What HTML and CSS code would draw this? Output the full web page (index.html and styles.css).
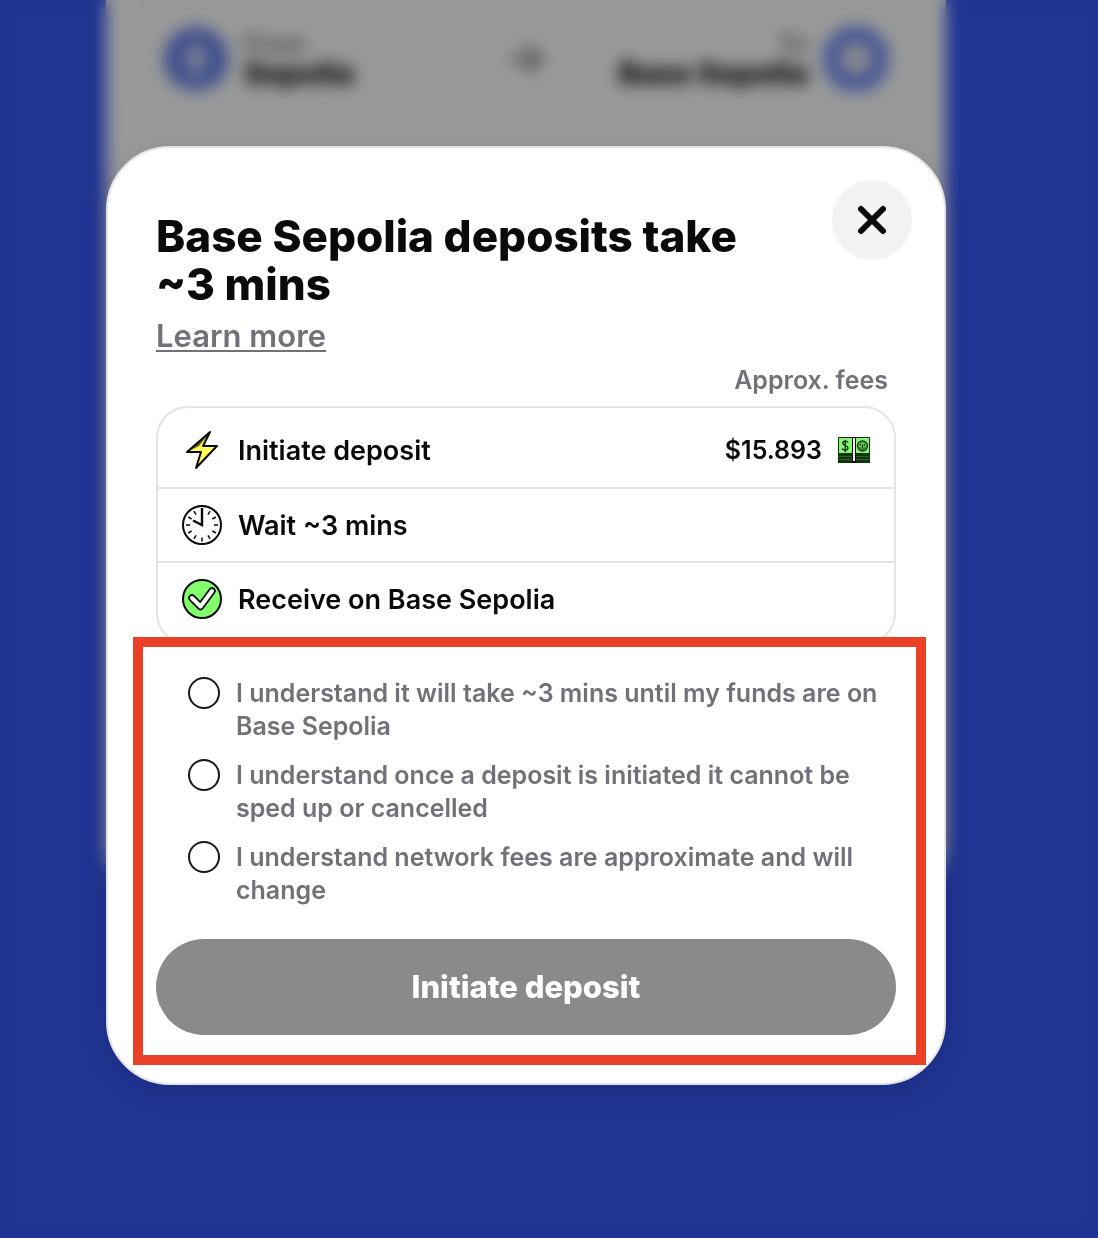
FILE: index.html
```html
<!DOCTYPE html>
<html lang="en">
<head>
<meta charset="utf-8">
<meta name="viewport" content="width=device-width, initial-scale=1">
<title>Base Sepolia deposit</title>
<link rel="stylesheet" href="styles.css">
</head>
<body>
<div class="page">
  <main class="bridge" aria-hidden="true">
    <div class="route">
      <svg class="chain" viewBox="0 0 64 64"><circle cx="32" cy="32" r="32" fill="#627eea"/><path d="M32 10 46 33 32 41 18 33zM32 44 46 36 32 55 18 36z" fill="#cdd5f6"/></svg>
      <div class="route-name">
        <span class="route-label">From</span>
        <span class="route-chain">Sepolia</span>
      </div>
      <svg class="arrow" viewBox="0 0 36 36" fill="none" stroke="#71717a" stroke-width="5" stroke-linecap="round" stroke-linejoin="round"><path d="M4 18h27M20 7l12 11-12 11"/></svg>
      <div class="route-name route-name-to">
        <span class="route-label">To</span>
        <span class="route-chain">Base Sepolia</span>
      </div>
      <svg class="chain" viewBox="0 0 64 64"><circle cx="32" cy="32" r="25" fill="#e8e8f0" stroke="#6a89f8" stroke-width="16"/><path d="M24 33h14" stroke="#a0aee8" stroke-width="4"/></svg>
    </div>
  </main>

  <div class="overlay">
    <div class="modal" role="dialog" aria-modal="true" aria-labelledby="modal-title">
      <button class="close" type="button" aria-label="Close">
        <svg viewBox="0 0 32 32" fill="none" stroke="#0a0a0b" stroke-width="6" stroke-linecap="round"><path d="M5 5l22 22M27 5 5 27"/></svg>
      </button>
      <h1 class="title" id="modal-title">Base Sepolia deposits take ~3 mins</h1>
      <a class="learn" href="#">Learn more</a>
      <p class="fees">Approx. fees</p>
      <ul class="steps">
        <li class="step">
          <svg class="step-icon" viewBox="0 0 40 40"><path d="M28 2 5 22h14l-5 16L35 16H21z" fill="#ffff55"/><path d="M28 2 5 22l12-6z" fill="#5b5a1c"/><path d="M28 2 5 22h14l-5 16L35 16H21z" fill="none" stroke="#0a0a0b" stroke-width="2" stroke-linejoin="round"/></svg>
          <span class="step-name">Initiate deposit</span>
          <span class="cost">$15.893</span>
          <svg class="cash" viewBox="0 0 32 26"><path fill="#12340e" d="M0 0h32v26H0z"/><path fill="#83f774" d="M1 1h30v15H1z"/><path d="M1 19.500h30M1 22.500h30" stroke="#2f6427"/><path fill="#0a0a0b" d="M14 0h4v26h-4z"/><path fill="#eee" d="M15 1h2v23h-2z"/><path d="M10 5.500C9 3.500 4.500 4 4.800 6.500S10 8.500 10 11 5 13.500 4.200 11.500M7.300 3v12" fill="none" stroke="#12340e" stroke-width="1.400"/><circle cx="24.500" cy="9" r="5" fill="#58bd4b" stroke="#12340e" stroke-width="1.300"/><path d="M22.500 7v1.500M26.500 7v1.500M22 10.500c1 2.500 4 2.500 5 0M24.500 8v3" fill="none" stroke="#12340e"/></svg>
        </li>
        <li class="step">
          <svg class="step-icon" viewBox="0 0 40 40" fill="none" stroke="#0a0a0b"><circle cx="20" cy="20" r="19" fill="#fff" stroke-width="2"/><path d="M20 32.500v4" stroke-width="1.500"/><path d="M32 20h4M4 20h4M30.400 14l3.400-2M26 9.600l2-3.400M14 9.600l-2-3.400M9.600 14l-3.400-2M9.600 26l-3.400 2M14 30.400l-2 3.400M26 30.400l2 3.400M30.400 26l3.400 2" stroke-width="1.500"/><path d="M20 3v17l-9-4.500" stroke-width="2.400"/></svg>
          <span class="step-name">Wait ~3 mins</span>
        </li>
        <li class="step">
          <svg class="step-icon" viewBox="0 0 40 40" fill="none" stroke-linecap="round" stroke-linejoin="round"><circle cx="20" cy="20" r="19" fill="#83ff6e" stroke="#0a0a0b" stroke-width="2"/><path d="M10 19l8.500 8.500L30 12" stroke="#0a0a0b" stroke-width="7.500"/><path d="M10 19l8.500 8.500L30 12" stroke="#fff" stroke-width="4"/></svg>
          <span class="step-name">Receive on Base Sepolia</span>
        </li>
      </ul>
      <form class="confirm">
        <div class="checks">
          <label class="check"><input type="checkbox"><span>I understand it will take ~3 mins until my funds are on<br>Base Sepolia</span></label>
          <label class="check"><input type="checkbox"><span>I understand once a deposit is initiated it cannot be<br>sped up or cancelled</span></label>
          <label class="check"><input type="checkbox"><span>I understand network fees are approximate and will<br>change</span></label>
        </div>
        <button class="submit" type="submit" disabled>Initiate deposit</button>
      </form>
    </div>
  </div>
</div>
</body>
</html>
```
FILE: styles.css
```css
*, *::before, *::after { box-sizing: border-box; }

body {
  margin: 0;
  background: #3457f5;
  color: #0a0a0b;
  font-family: Inter, "Liberation Sans", sans-serif;
}

.page {
  position: relative;
  min-height: 100vh;
  overflow: hidden;
}

/* Bridge card behind the dialog */
.bridge {
  position: absolute;
  inset: 0 46px auto 0;
  max-width: 840px;
  height: 892px;
  margin: 0 auto;
  padding: 0 36px;
  background: #fff;
  border-radius: 0 0 48px 48px;
}

.route {
  display: flex;
  align-items: center;
  gap: 16px;
  height: 120px;
  padding: 0 20px;
  border: 2px solid #f3f3f4;
  border-top: 0;
  border-radius: 0 0 32px 32px;
}

.chain { width: 64px; height: 64px; }
.arrow { width: 36px; height: 36px; }

.route-name {
  display: flex;
  flex: 1;
  flex-direction: column;
}

.route-name-to { text-align: right; }

.route-label {
  color: #71717a;
  font-size: 25px;
  font-weight: 600;
  line-height: 28px;
}

.route-chain {
  font-size: 30px;
  font-weight: 800;
  line-height: 30px;
}

.overlay {
  position: relative;
  min-height: 100vh;
  padding: 146px 46px 48px 0;
  background: rgba(0, 0, 0, 0.4);
  backdrop-filter: blur(8px);
}

.modal {
  position: relative;
  max-width: 840px;
  margin: 0 auto;
  padding: 64px 48px 48px;
  background: #fff;
  border: 2px solid #e4e4e7;
  border-radius: 64px;
  box-shadow: 0 8px 32px rgba(0, 0, 0, 0.12);
}

.close {
  position: absolute;
  top: 32px;
  right: 32px;
  display: grid;
  place-items: center;
  width: 80px;
  height: 80px;
  padding: 0;
  background: #f3f3f4;
  border: 0;
  border-radius: 50%;
}

.close svg { width: 32px; height: 32px; }

.title {
  max-width: 620px;
  margin: 0 0 10px;
  font-size: 44px;
  font-weight: 800;
  line-height: 48px;
}

.learn {
  display: block;
  width: fit-content;
  color: #71717a;
  font-size: 31px;
  font-weight: 600;
  line-height: 36px;
  text-decoration-thickness: 2px;
  text-underline-offset: 3px;
}

.fees {
  margin: 8px 8px 8px 0;
  color: #71717a;
  font-size: 25px;
  font-weight: 600;
  line-height: 36px;
  text-align: right;
}

.steps {
  margin: 0;
  padding: 5px 0 8px;
  list-style: none;
  border: 2px solid #e4e4e7;
  border-radius: 32px;
}

.step {
  display: flex;
  align-items: center;
  gap: 16px;
  height: 74px;
  padding: 0 24px;
  font-size: 27px;
  font-weight: 600;
}

.step + .step { border-top: 2px solid #e4e4e7; }
.step-icon { width: 40px; height: 40px; }
.step-name { flex: 1; }
.cost { font-size: 25px; }
.cash { width: 32px; height: 26px; }

.confirm {
  position: relative;
  padding-top: 32px;
}

/* Highlight frame around the confirmation part */
.confirm::after {
  content: "";
  position: absolute;
  inset: -8px -30px -30px -23px;
  border: 10px solid #ea4025;
  pointer-events: none;
}

.checks {
  display: grid;
  gap: 16px;
  padding-left: 32px;
}

.check {
  display: flex;
  gap: 16px;
  color: #71717a;
  font-size: 25px;
  font-weight: 600;
  line-height: 33px;
}

.check input {
  flex: none;
  appearance: none;
  width: 32px;
  height: 32px;
  margin: 0;
  background: #fff;
  border: 2px solid #18181b;
  border-radius: 50%;
}

.submit {
  display: block;
  width: 100%;
  height: 96px;
  margin-top: 32px;
  background: #8a8a8b;
  color: #fff;
  border: 0;
  border-radius: 48px;
  font: 800 31px/36px Inter, "Liberation Sans", sans-serif;
}
```
